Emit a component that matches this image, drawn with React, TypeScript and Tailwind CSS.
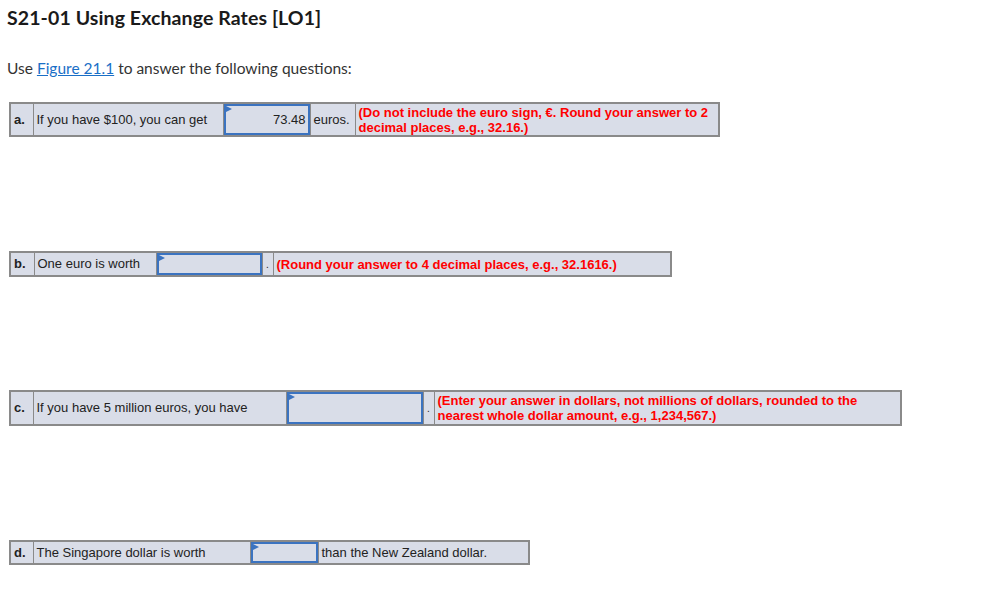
const cell = 'border border-[#8a8a8a] px-[3px] align-middle';
const note = 'border border-[#8a8a8a] px-[3px] align-middle text-[13px] font-bold leading-[15px] text-[#f00]';

function AnswerBox({ value, width, height }: { value?: string; width: number; height: number }) {
  return (
    <td className="border border-[#8a8a8a] p-0 align-middle" style={{ width }}>
      <div
        className="relative flex items-center justify-end border-2 border-[#3b73c0] bg-[#d9dde8] pr-[2px] text-[13px] text-[#222]"
        style={{ height }}
      >
        <span className="absolute left-0 top-0 h-0 w-0 border-y-[3px] border-l-[6px] border-y-transparent border-l-[#3b73c0]" />
        {value}
      </div>
    </td>
  );
}

export default function App() {
  return (
    <div className="min-h-screen bg-white font-['Liberation_Sans',Arial,sans-serif] text-[#222]">
      <div className="px-[7px] pt-[6px]">
        <h1 className="font-['Lato',sans-serif] text-[19.5px] font-bold leading-[24px] tracking-[0.1px] text-[#1a1a1a]">
          S21-01 Using Exchange Rates [LO1]
        </h1>
        <p className="mt-[28px] font-['Lato',sans-serif] text-[15.5px] leading-[20px] text-[#333]">
          Use{' '}
          <a href="#" className="text-[#1a6fc7] underline">
            Figure 21.1
          </a>{' '}
          to answer the following questions:
        </p>
      </div>

      {/* a */}
      <table className="ml-[9px] mt-[24px] border-collapse border-2 border-[#8a8a8a] bg-[#d9dde8] text-[13px]" style={{ width: 711 }}>
        <tbody>
          <tr className="h-[32px]">
            <td className={`${cell} w-[23px] font-bold`}>a.</td>
            <td className={`${cell} w-[190px]`}>If you have $100, you can get</td>
            <AnswerBox value="73.48" width={87} height={31} />
            <td className={`${cell} w-[45px]`}>euros.</td>
            <td className={note}>
              (Do not include the euro sign, €. Round your answer to 2 decimal places, e.g., 32.16.)
            </td>
          </tr>
        </tbody>
      </table>

      {/* b */}
      <table className="ml-[9px] mt-[114px] border-collapse border-2 border-[#8a8a8a] bg-[#d9dde8] text-[13px]" style={{ width: 663 }}>
        <tbody>
          <tr className="h-[22px]">
            <td className={`${cell} w-[24px] font-bold`}>b.</td>
            <td className={`${cell} w-[122px]`}>One euro is worth</td>
            <AnswerBox width={106} height={22} />
            <td className={`${cell} w-[11px] px-0 text-center text-[10px]`}>.</td>
            <td className={note}>(Round your answer to 4 decimal places, e.g., 32.1616.)</td>
          </tr>
        </tbody>
      </table>

      {/* c */}
      <table className="ml-[9px] mt-[113px] border-collapse border-2 border-[#8a8a8a] bg-[#d9dde8] text-[13px]" style={{ width: 893 }}>
        <tbody>
          <tr className="h-[33px]">
            <td className={`${cell} w-[23px] font-bold`}>c.</td>
            <td className={`${cell} w-[253px]`}>If you have 5 million euros, you have</td>
            <AnswerBox width={137} height={32} />
            <td className={`${cell} w-[11px] px-0 text-center text-[10px]`}>.</td>
            <td className={note}>
              (Enter your answer in dollars, not millions of dollars, rounded to the nearest whole dollar amount, e.g., 1,234,567.)
            </td>
          </tr>
        </tbody>
      </table>

      {/* d */}
      <table className="ml-[9px] mt-[114px] border-collapse border-2 border-[#8a8a8a] bg-[#d9dde8] text-[13px]" style={{ width: 521 }}>
        <tbody>
          <tr className="h-[22px]">
            <td className={`${cell} w-[23px] font-bold`}>d.</td>
            <td className={`${cell} w-[217px]`}>The Singapore dollar is worth</td>
            <AnswerBox width={68} height={21} />
            <td className={cell}>than the New Zealand dollar.</td>
          </tr>
        </tbody>
      </table>
    </div>
  );
}
